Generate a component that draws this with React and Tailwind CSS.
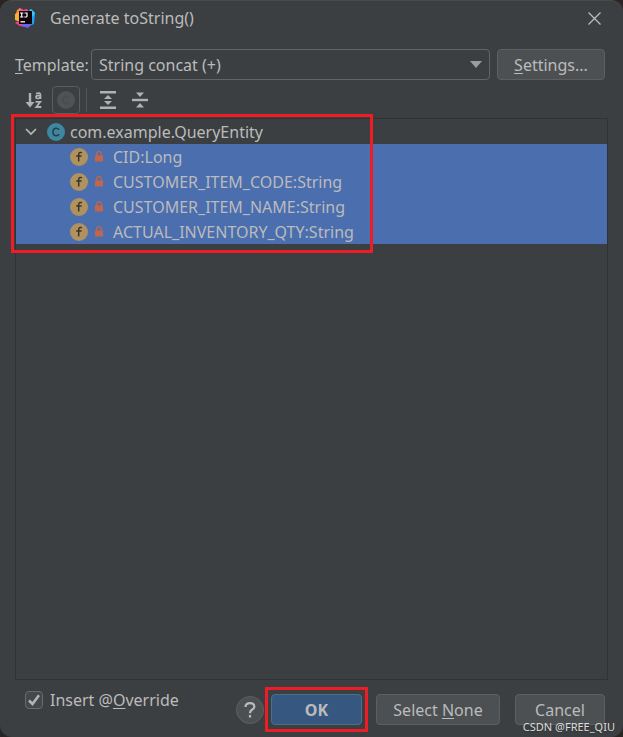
import React, { useState } from 'react';

const fields = [
  { name: 'CID', type: 'Long' },
  { name: 'CUSTOMER_ITEM_CODE', type: 'String' },
  { name: 'CUSTOMER_ITEM_NAME', type: 'String' },
  { name: 'ACTUAL_INVENTORY_QTY', type: 'String' },
];

function IdeaLogo() {
  return (
    <svg width="20" height="20" viewBox="0 0 20 20" aria-hidden="true">
      <path d="M2 2 L5 0 L8 2 L7 11 L0 9 Z" fill="#fb8a3c" />
      <path d="M0 6 L4 4 L5 14 L0 12 Z" fill="#fbb02b" />
      <path d="M5 0 L8 2 L12 1 L14 4 L5 5 Z" fill="#f2509c" />
      <path d="M12 4 L16 1 L20 5 L19 16 L12 19 Z" fill="#12a4f5" />
      <path d="M16 1 L20 5 L18 9 L14 3 Z" fill="#35c6f4" />
      <path d="M0 15 L5 12 L13 17 L10 19 L5 18 Z" fill="#ef3f86" />
      <path d="M7 16 L18 15 L13 20 L7 18 Z" fill="#6a62f0" />
      <rect x="4" y="3" width="13" height="13" fill="#0b0305" />
      <path d="M5 5 H8.4 M6.7 5 V9 M5 9 H8.4 M9.5 5 H12 V8 Q12 9 11 9 H9.3" stroke="#fff" strokeWidth="1.2" fill="none" />
      <path d="M5.5 13.8 H10" stroke="#fff" strokeWidth="1.3" />
    </svg>
  );
}

function SortIcon() {
  return (
    <svg width="18" height="18" viewBox="0 0 18 18" fill="none" stroke="#afb1b3" aria-hidden="true">
      <path d="M5 2 V13" strokeWidth="2.4" />
      <path d="M0.5 11 H9.5 L5 16.5 Z" fill="#afb1b3" stroke="none" />
      <path d="M11 2.6 Q15.5 1 15.5 4 V8 M15.5 4.6 H13 Q11 4.6 11 6.1 Q11 7.7 13 7.5 Q15 7.2 15.5 5.8" strokeWidth="1.7" />
      <path d="M10.6 10.8 H15.3 L11.3 16 H16.3" strokeWidth="1.8" />
    </svg>
  );
}

function ExpandIcon() {
  return (
    <svg width="16" height="18" viewBox="0 0 16 18" fill="#afb1b3" aria-hidden="true">
      <path d="M0 0 H16 V2.5 H0 Z M0 15.5 H16 V18 H0 Z" />
      <path d="M8 4 L12 8 H4 Z M4 10 H12 L8 14 Z" />
    </svg>
  );
}

function CollapseIcon() {
  return (
    <svg width="16" height="16" viewBox="0 0 16 16" fill="#afb1b3" aria-hidden="true">
      <path d="M0 6.8 H16 V9.2 H0 Z" />
      <path d="M4 0.5 H12 L8 5 Z M8 11 L12 15.5 H4 Z" />
    </svg>
  );
}

function ClassIcon() {
  return (
    <svg width="18" height="18" viewBox="0 0 18 18" aria-hidden="true">
      <circle cx="9" cy="9" r="9" fill="#3e87a0" />
      <path d="M12 6.8 Q11 5.3 9.2 5.3 Q6 5.3 6 9 Q6 12.7 9.2 12.7 Q11 12.7 12 11.2" fill="none" stroke="#263f49" strokeWidth="1.6" />
    </svg>
  );
}

function FieldIcon() {
  return (
    <svg width="18" height="18" viewBox="0 0 18 18" aria-hidden="true">
      <circle cx="9" cy="9" r="9" fill="#b0925f" />
      <path d="M12 4.6 Q8.7 3.7 8.7 6.6 V13.5 M6.2 7.9 H11.6" fill="none" stroke="#3c3426" strokeWidth="1.5" />
    </svg>
  );
}

function LockIcon() {
  return (
    <svg width="8" height="11" viewBox="0 0 8 11" aria-hidden="true">
      <path d="M1.8 5 V2.6 Q1.8 0.7 4 0.7 Q6.2 0.7 6.2 2.6 V5" fill="none" stroke="#c2664a" strokeWidth="1.3" />
      <rect y="4.5" width="8" height="6" fill="#c2664a" />
    </svg>
  );
}

export default function App() {
  const [template, setTemplate] = useState('concat');
  const [insertOverride, setInsertOverride] = useState(true);

  const button = 'h-[31px] rounded border border-[#5e6060] bg-[#4c5052]';

  return (
    <div className="min-h-screen flex flex-col bg-[#2a2525] font-['Noto_Sans','Open_Sans',sans-serif] text-base leading-6 text-[#bbbbbb]">
      <div className="flex-1 flex flex-col rounded-xl border-t border-[#4a4a4a] bg-[#3c3f41]">
        {/* Title bar */}
        <header className="h-[34px] flex items-center pl-[15px] pr-[22px]">
          <IdeaLogo />
          <h1 className="flex-1 ml-[15px]">Generate toString()</h1>
          <button type="button" aria-label="Close">
            <svg width="13" height="13" viewBox="0 0 13 13" stroke="#bbbbbb" strokeWidth="1.3" aria-hidden="true">
              <path d="M0.5 0.5 L12.5 12.5 M12.5 0.5 L0.5 12.5" />
            </svg>
          </button>
        </header>

        {/* Template row */}
        <div className="mt-3.5 pl-[15px] pr-[18px] flex items-center">
          <label htmlFor="template" className="w-[76px] whitespace-nowrap">
            <span className="underline underline-offset-2">T</span>emplate:
          </label>
          <div className="relative flex-1">
            <select
              id="template"
              value={template}
              onChange={(e) => setTemplate(e.target.value)}
              className="block w-full h-[31px] appearance-none rounded-sm border border-[#646464] pl-[7px] pr-8 outline-none"
            >
              <option value="concat">String concat (+)</option>
            </select>
            <svg className="absolute right-2 top-3 pointer-events-none" width="12" height="7" viewBox="0 0 12 7" aria-hidden="true">
              <path d="M0 0 H12 L6 7 Z" fill="#9a9da0" />
            </svg>
          </div>
          <button type="button" className={`${button} ml-[7px] w-[108px]`}>
            <span className="underline underline-offset-2">S</span>ettings...
          </button>
        </div>

        {/* Toolbar */}
        <div className="mt-1.5 pl-[25px] flex items-center h-7">
          <button type="button" aria-label="Sort alphabetically">
            <SortIcon />
          </button>
          <button type="button" aria-label="Show classes" className="ml-[9px] size-7 flex items-center justify-center rounded border border-[#5a5d5f]">
            <svg width="18" height="18" viewBox="0 0 18 18" aria-hidden="true">
              <circle cx="9" cy="9" r="9" fill="#505253" />
              <path d="M12 6.8 Q11 5.3 9.2 5.3 Q6 5.3 6 9 Q6 12.7 9.2 12.7 Q11 12.7 12 11.2" fill="none" stroke="#494b4c" strokeWidth="1.5" />
            </svg>
          </button>
          <div className="ml-1.5 w-px h-6 bg-[#515355]" />
          <button type="button" aria-label="Expand all" className="ml-[13px]">
            <ExpandIcon />
          </button>
          <button type="button" aria-label="Collapse all" className="ml-4">
            <CollapseIcon />
          </button>
        </div>

        {/* Members tree */}
        <div className="relative flex-1 mt-1 ml-[15px] mr-[15px] border border-[#323232]">
          <div className="flex items-center h-[25px] pl-[9px]">
            <svg width="12" height="8" viewBox="0 0 12 8" fill="none" stroke="#b5b7b9" strokeWidth="1.7" aria-hidden="true">
              <path d="M1 1 L6 6 L11 1" />
            </svg>
            <span className="ml-2.5">
              <ClassIcon />
            </span>
            <span className="ml-[5px]">com.example.QueryEntity</span>
          </div>
          <ul className="bg-[#4b6eaf]">
            {fields.map((field) => (
              <li key={field.name} className="flex items-center h-[25px] pl-[54px]">
                <FieldIcon />
                <span className="ml-[7px]">
                  <LockIcon />
                </span>
                <span className="ml-2.5">{field.name}:{field.type}</span>
              </li>
            ))}
          </ul>
          <div className="absolute -left-[5px] -top-[5px] w-[362px] h-[139px] border-3 border-[#ee1c24] pointer-events-none" />
        </div>

        {/* Footer */}
        <footer className="relative flex items-start justify-between pt-2 pb-3 pl-[25px] pr-[18px]">
          <label className="flex items-center">
            <span className="relative">
              <input
                type="checkbox"
                checked={insertOverride}
                onChange={(e) => setInsertOverride(e.target.checked)}
                className="block size-[18px] appearance-none rounded-sm border border-[#6b6b6b] bg-[#43494a]"
              />
              {insertOverride && (
                <svg className="absolute left-[3px] top-[3px] pointer-events-none" width="12" height="12" viewBox="0 0 12 12" fill="none" stroke="#b4b4b4" strokeWidth="2.6" aria-hidden="true">
                  <path d="M1 6.5 L4.5 10 L11 1.2" />
                </svg>
              )}
            </span>
            <span className="ml-[7px]">
              Insert @<span className="underline underline-offset-2">O</span>verride
            </span>
          </label>
          <div className="mt-1.5 flex items-center">
            <button type="button" aria-label="Help" className="size-7 rounded-full border border-[#5e6060] bg-[#4c5052] flex items-center justify-center">
              <svg width="12" height="16" viewBox="0 0 12 16" fill="none" stroke="#bbbbbb" strokeWidth="2.2" aria-hidden="true">
                <path d="M1.5 5 Q1.5 1.2 6 1.2 Q10.3 1.2 10.3 4.6 Q10.3 6.5 8 7.8 Q6 9 6 11.3 M6 13 V15.4" />
              </svg>
            </button>
            <div className="relative ml-[7px]">
              <button type="button" className="block w-[91px] h-[31px] rounded border border-[#4c708c] bg-[#365880] font-bold">
                OK
              </button>
              <div className="absolute -inset-x-[6px] -inset-y-[7px] border-3 border-[#ee1c24] pointer-events-none" />
            </div>
            <button type="button" className={`${button} ml-3.5 w-[124px]`}>
              Select <span className="underline underline-offset-2">N</span>one
            </button>
            <button type="button" className={`${button} ml-[15px] w-[90px]`}>
              Cancel
            </button>
          </div>
          <span className="absolute right-2 bottom-0 text-[11px] leading-5 text-[#dddddd] text-shadow-xs">CSDN @FREE_QIU</span>
        </footer>
      </div>
    </div>
  );
}
